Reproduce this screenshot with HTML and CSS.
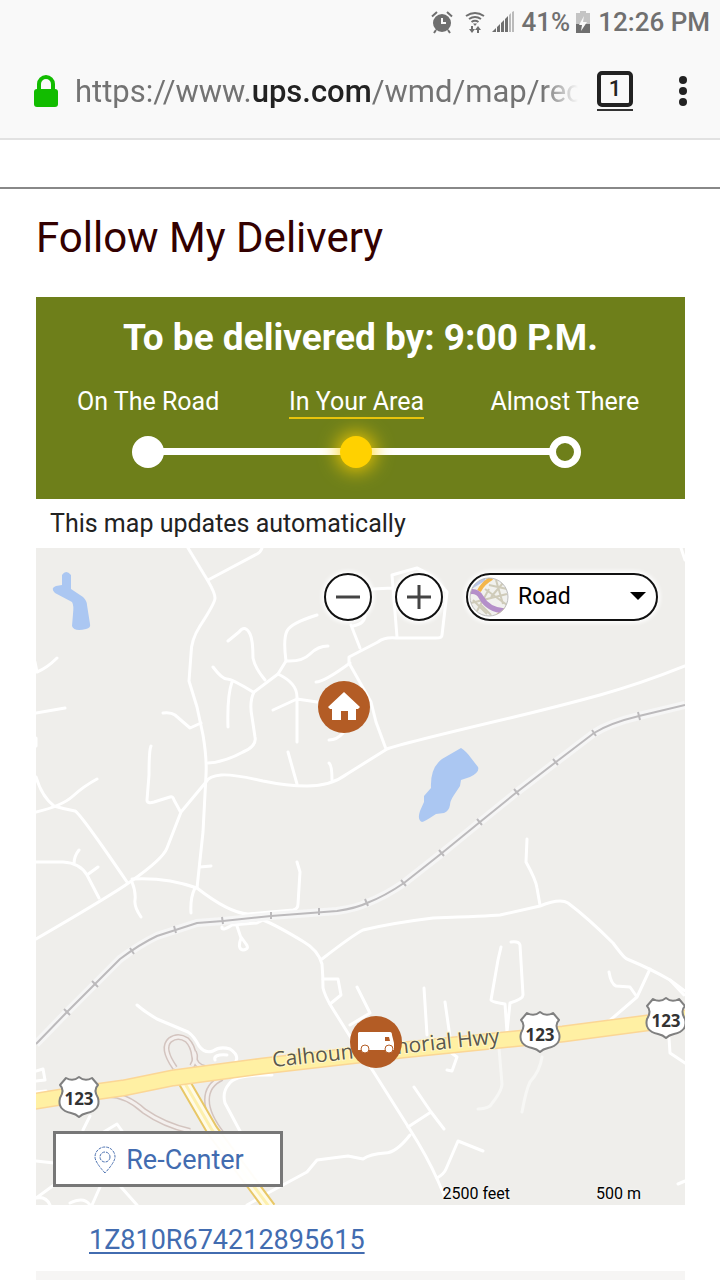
FILE: index.html
```
<!DOCTYPE html>
<html lang="en">
<head>
    <meta charset="utf-8">
    <meta name="viewport" content="width=device-width, initial-scale=1">
    <title>Follow My Delivery</title>
    <link rel="stylesheet" href="styles.css">
</head>
<body>
    <header class="browser">
        <div class="status">
            <svg class="icon-alarm" width="22" height="24" viewBox="0 0 22 24">
                <circle cx="11" cy="13" r="9" fill="#6f6f6f"/>
                <path d="M1 6.500 6 2M21 6.500 16 2M5 20l-2 3M17 20l2 3" stroke="#6f6f6f" stroke-width="2" fill="none"/>
                <path d="M11 8v5h4" stroke="#f9f9f9" stroke-width="2" fill="none"/>
            </svg>
            <svg class="icon-wifi" width="20" height="24" viewBox="0 0 20 24">
                <path d="M1 6q9-6 18 0M4 9q6-4 12 0M6.500 12q3.500-2.500 7 0" stroke="#6f6f6f" stroke-width="2" fill="none"/>
                <path d="M8 13.500h4L10 16z" fill="#6f6f6f"/>
                <path d="M7 16v4M13 23v-4" stroke="#6f6f6f" stroke-width="2"/>
                <path d="M4 19h6l-3 4zM10 20h6l-3-4z" fill="#6f6f6f"/>
            </svg>
            <svg class="icon-signal" width="22" height="22" viewBox="0 0 22 22">
                <path d="M0 21h4v-4zM5 21v-5l3-3v8zM9 21v-9l3-3v12zM13 21V8l3-3v16z" fill="#6f6f6f"/>
                <path d="M17 21V4l2-2v19zM20 21V1l2-1v21z" fill="#bbb"/>
            </svg>
            <span class="percent">41%</span>
            <svg class="icon-battery" width="14" height="22" viewBox="0 0 14 22">
                <path d="M0 2h4V0h6v2h4v11H0z" fill="#c4c4c4"/>
                <path d="M0 13h14v9H0z" fill="#6f6f6f"/>
                <path d="M8 5 3 14h3l-1 6 6-9H7z" fill="#f9f9f9"/>
            </svg>
            <span>12:26 PM</span>
        </div>
        <div class="toolbar">
            <svg class="lock" width="26" height="32" viewBox="0 0 26 32">
                <path d="M6 15V9a7 7 0 0 1 14 0v6" fill="none" stroke="#12bc00" stroke-width="4"/>
                <rect x="1" y="14" width="24" height="18" rx="3" fill="#12bc00"/>
            </svg>
            <button class="url" type="button">https://www.<b>ups.com</b>/wmd/map/rec</button>
            <button class="tabs" type="button" aria-label="Tabs"><span>1</span></button>
            <button class="menu" type="button" aria-label="Menu">
                <svg width="8" height="30" viewBox="0 0 8 30" fill="#222">
                    <circle cx="4" cy="4" r="4"/>
                    <circle cx="4" cy="15" r="4"/>
                    <circle cx="4" cy="26" r="4"/>
                </svg>
            </button>
        </div>
    </header>
    <div class="topline"></div>

    <main>
        <h1>Follow My Delivery</h1>

        <section class="banner">
            <h2>To be delivered by: 9:00 P.M.</h2>
            <ol class="steps">
                <li class="done"><span class="label">On The Road</span><span class="dot"></span></li>
                <li class="current"><span class="label">In Your Area</span><span class="dot"></span></li>
                <li class="next"><span class="label">Almost There</span><span class="dot"></span></li>
            </ol>
        </section>

        <p class="note">This map updates automatically</p>

        <div class="map">
            <svg class="map-canvas" viewBox="36 548 649 657">
                <rect x="36" y="548" width="649" height="657" fill="#efeeeb"/>

                <!-- ponds -->
                <g fill="#abc7f2">
                    <path d="M62 575q4-6 9 0v14l12 8q4 4 4 8l3 19q1 4-4 5-12 3-14-3l1-12q1-9-1-12l-17-9q-5-5 1-7l6-1z"/>
                    <path d="M461 748q5 3 10 10l7 9q2 5-8 10l-9 3-1 6-6 9q-4 6-4 10-1 6-6 8l-8 1q-12 8-14 8-5-2-2-11l4-9v-6l7-8q-1-20 11-29z"/>
                </g>

                <!-- minor roads -->
                <g class="road">
                    <path d="M188 548l20 33q7 12 7 17t-15 28q-9 14-9 28l-2 27 8 26 6 28q4 24 3 40l-3 57-6 56"/>
                    <path d="M208 580l49-26q4-2 5-6M35 662l2 10q10-4 20-14M36 713l29-5M36 738v8"/>
                    <path d="M163 713q8-1 12 2l15 13 11-5M151 746q-2 4-2 29l-2 25q0 4 7 2l16-5q3-1 4 3l6 11"/>
                    <path d="M228 641l11-9q6-8 11 2 3 6 3 24 2 10 12 22M213 667q9 12 14 12 5 0 26 13M232 682q-5 14-4 45"/>
                    <path d="M317 615q-26 8-30 16t-1 30l-8 13-24 18q-5 10-2 25l3 20q2 9-12 15-18 10-35 11"/>
                    <path d="M286 661q16 1 24-7t18-8M278 674q19 9 19 23v45M273 710l24-11 20 3M316 682q8 0 34-19"/>
                    <path d="M351 625l9 23M365 615q0 9-12 11M447 592l-5 43q0 3-6 3h-40q-12-1-18 4l-29 15v6l22 39 5 20 10 27M397 637l-5-62 25-7q15 6 30 24M373 589l19-1"/>
                    <path d="M685 666q-45 18-85 29t-90 23q-110 26-123 31l-40 25q-16 12-40 12-20 0-44-5-30-7-42-6t-15 7l-25 30-14 36q-4 11-37 34-20 14-94 57"/>
                    <path d="M288 752l9 32M329 763q3 2 3 17M329 740q8 0 14-7M681 548l4 12"/>
                    <path d="M36 777q6 20 18 29 10 3 21 5 5 2 52 71M36 812q26-6 37-16t24-17M36 862l27 0q17 1 24 13l12 23M79 850q-5 6-5 14M98 867l-11 8"/>
                    <path d="M132 882q4 10 3 18-1 7 6 17M132 879q34-2 65 9 32 25 51 26l45-4q5-1 5-6l2-32-3-10M200 867l11-1M195 888q-5 10-4 25"/>
                    <path d="M222 927q-1 5 10-2l25-2 6-3q13 5 41 22 14 8 18 22 1 12 1 24 2 8 8 18l20 32 22 33 36 57q18 28 29 53l6 14"/>
                    <path d="M237 926l4 12q-4 11 2 12 7-1 3-6l-5-7M323 979h15l3 16-11 9"/>
                    <path d="M322 959q31-24 41-29 29-7 70-12 55-2 67-3l40-9q20-8 28-3 20 15 45 40 11 15 14 16 24 10 43 21l15 11"/>
                    <path d="M527 839l-1 23q10 18 11 26l3 17M501 947l-3 13-7 40q0 2 14 4l2 28M511 942q8-1 9 3l3 50q0 4-13 8l-3 29"/>
                    <path d="M609 972q2 12 7 14l14 1 7 10M650 969l-13 28-29 25M670 980l14 15M424 988l3 47M445 1002l5 35M357 987l13 26-20 12"/>
                    <path d="M450 1052l7 5-5 14-5-1M414 1087l17 25 13 17M431 1112l-23 15M410 1135q-14 18-25 18-15 1-22 6l-15-3-31 4-10 12-39 21-21 12"/>
                    <path d="M437 1178q7-4 9-9l12-28 25 10M669 1038l1 15 15 10M678 1184l7-3"/>
                    <path d="M137 1005q8 7 20 14l31 13q6 4 11 14 6 8 14 5 7-5 17-2 9 6 6 12M215 1060q-2-6 12-5M272 1075q-37-1-43 9-7 8-4 19l16 30"/>
                    <path d="M36 1071l7-2 2 11-9 1M36 1092l10-1M90 1116l-7 14M102 1133l15-9 5 7M36 1161l18 2M54 1185l-18 13q10-2 14 7M100 1187l-8 18M121 1187l16 18M70 1203q14-7 20 2"/>
                    <path class="faint" d="M499 1048l3 36q0 7-12 22-5 3-12 3M542 1057q-2 14-12 25-4 8-8 30"/>
                </g>

                <!-- railway -->
                <path class="rail-bed" d="M36 1044l31-32 28-28 25-25q20-15 37-23l40-13 26-2 48-5 66-5q20-3 30-8 18-7 37-20l38-30 38-31 37-30 39-30q25-19 38-29 16-10 45-17l46-11"/>
                <path class="rail" d="M36 1044l31-32 28-28 25-25q20-15 37-23l40-13 26-2 48-5 66-5q20-3 30-8 18-7 37-20l38-30 38-31 37-30 39-30q25-19 38-29 16-10 45-17l46-11"/>
                <path class="rail" d="M638 712l2 8M592 730l4 6M553 759l5 6M514 789l5 6M477 819l5 6M439 850l5 6M401 880l5 6M365 899l3 7M319 908v7M271 912v7M222 917l1 7M174 926l2 7M130 948l4 6M92 981l6 6M64 1009l6 6"/>

                <!-- ramps -->
                <g class="ramp">
                    <path d="M175 1068q-14-20-5-28 8-6 17 0 6 6 7 16t11 12M222 1078q-15 7-15 22t16 35M104 1095q20-2 40 16 20 14 46 20"/>
                    <path d="M192 1066q5-8 2-14"/>
                </g>
                <g class="ramp-core">
                    <path d="M175 1068q-14-20-5-28 8-6 17 0 6 6 7 16t11 12M222 1078q-15 7-15 22t16 35M104 1095q20-2 40 16 20 14 46 20"/>
                    <path d="M192 1066q5-8 2-14"/>
                </g>

                <!-- highways -->
                <path d="M183 1080l29 50 58 78" fill="none" stroke="#e8c766" stroke-width="13"/>
                <path d="M183 1080l29 50 58 78" fill="none" stroke="#fffbe6" stroke-width="9"/>
                <path d="M183 1080l29 50 58 78" fill="none" stroke="#fdf0ae" stroke-width="3"/>
                <path d="M30 1102l50-8 43-6 50-10 90-12 140-16 160-16 130-17" fill="none" stroke="#fbd695" stroke-width="17"/>
                <path d="M30 1102l50-8 43-6 50-10 90-12 140-16 160-16 130-17" fill="none" stroke="#fff0a3" stroke-width="14"/>
                <text class="hwy-name" transform="translate(273 1067) rotate(-6)">Calhoun Memorial Hwy</text>

                <!-- route shields -->
                <g class="shield">
                    <g transform="translate(79 1096)">
                        <path d="M-13-18q7 4 13-1 6 5 13 1l6 7q-5 5 0 13 3 12-11 15-5 1-8 4-3-3-8-4-14-3-11-15 5-8 0-13z"/>
                        <text y="9">123</text>
                    </g>
                    <g transform="translate(540 1031)">
                        <path d="M-13-18q7 4 13-1 6 5 13 1l6 7q-5 5 0 13 3 12-11 15-5 1-8 4-3-3-8-4-14-3-11-15 5-8 0-13z"/>
                        <text y="10">123</text>
                    </g>
                    <g transform="translate(666 1017)">
                        <path d="M-13-18q7 4 13-1 6 5 13 1l6 7q-5 5 0 13 3 12-11 15-5 1-8 4-3-3-8-4-14-3-11-15 5-8 0-13z"/>
                        <text y="10">123</text>
                    </g>
                </g>

                <!-- home -->
                <g transform="translate(344 707)">
                    <circle r="26" fill="#b35c25"/>
                    <path d="M0-15 16 0l-2 2h-2v11H4V4h-7v9h-9V2h-2l-2-2z" fill="#fff"/>
                </g>

                <!-- truck -->
                <g transform="translate(376 1042)">
                    <circle r="26" fill="#b35c25"/>
                    <path d="M-17-10h31q2 0 2 3l2 8v7H-18v-17z" fill="#fff"/>
                    <path d="M9-5h4l1 4H9z" fill="#b35c25"/>
                    <circle cx="-11" cy="7" r="4" fill="#fff" stroke="#b35c25"/>
                    <circle cx="13" cy="7" r="4" fill="#fff" stroke="#b35c25"/>
                </g>
            </svg>

            <div class="map-controls">
                <button class="zoom" type="button" aria-label="Zoom out">
                    <svg width="24" height="24" viewBox="0 0 24 24"><path d="M0 12h24"/></svg>
                </button>
                <button class="zoom" type="button" aria-label="Zoom in">
                    <svg width="24" height="24" viewBox="0 0 24 24"><path d="M0 12h24M12 0v24"/></svg>
                </button>
                <div class="map-type">
                    <select aria-label="Map type">
                        <option>Road</option>
                        <option>Aerial</option>
                    </select>
                    <svg class="type-icon" width="40" height="40" viewBox="0 0 40 40">
                        <clipPath id="disc"><circle cx="20" cy="20" r="19"/></clipPath>
                        <g clip-path="url(#disc)" fill="none">
                            <rect width="40" height="40" fill="#f1f1ee"/>
                            <path d="M2 26l36-9M8 34l12-22M16 12l22 16M22 20L34 6M27 3l7 24M12 28l10 10M20 8l18 4M4 23l14 14" stroke="#cfcbb9" stroke-width="2"/>
                            <path d="M3 10 16 2" stroke="#b9c6e8" stroke-width="3"/>
                            <path d="M10 14q4-8 13-13M28 39l9-7" stroke="#f3b64c" stroke-width="4"/>
                            <path d="M0 15q8-2 12 5 7 13 24 14" stroke="#b48fc9" stroke-width="5"/>
                        </g>
                        <circle cx="20" cy="20" r="19" fill="none" stroke="#bbb"/>
                    </svg>
                    <svg class="arrow" width="16" height="8" viewBox="0 0 16 8"><path d="M0 0h16L8 8z"/></svg>
                </div>
            </div>

            <button class="recenter" type="button">
                <svg width="22" height="28" viewBox="0 0 22 28" fill="none" stroke="#4a70b0" stroke-dasharray="3 1">
                    <path d="M11 27Q1 16 1 11a10 10 0 0 1 20 0q0 5-10 16z"/>
                    <circle cx="11" cy="11" r="5"/>
                </svg>
                Re-Center
            </button>

            <div class="scale">
                <span>2500 feet</span>
                <span>500 m</span>
            </div>
        </div>

        <a class="tracking" href="#">1Z810R674212895615</a>
        <div class="panel"></div>
    </main>
</body>
</html>
```
FILE: styles.css
```
* {
    box-sizing: border-box;
}
body {
    margin: 0;
    background-color: #fff;
    font-family: Roboto, Arial, sans-serif;
    color: #222;
}
button, select {
    font-family: inherit;
    cursor: pointer;
}
svg {
    display: block;
    flex-shrink: 0;
}

/* browser bar */
.browser {
    height: 140px;
    background-color: #f9f9f9;
    border-bottom: 2px solid #e2e2e2;
}
.status {
    display: flex;
    justify-content: flex-end;
    align-items: center;
    height: 44px;
    padding-right: 10px;
    font-size: 26px;
    font-weight: 500;
    color: #707070;
}
.icon-alarm {
    margin-right: 12px;
}
.icon-wifi {
    margin-right: 7px;
}
.icon-signal {
    margin-right: 8px;
}
.icon-battery {
    margin: 0 8px 0 6px;
}
.toolbar {
    display: flex;
    align-items: center;
    height: 94px;
    padding: 0 33px;
}
.lock {
    margin-right: 16px;
}
.url {
    flex: 1;
    min-width: 0;
    height: 48px;
    padding: 0;
    border: none;
    background: none;
    overflow: hidden;
    white-space: nowrap;
    text-align: left;
    font-size: 31px;
    color: #737373;
    -webkit-mask-image: linear-gradient(to left, transparent, #000 36px);
    mask-image: linear-gradient(to left, transparent, #000 36px);
}
.url b {
    font-weight: 500;
    color: #222;
}
.tabs {
    width: 36px;
    margin: 0 46px 0 19px;
    padding: 0 0 2px;
    border: none;
    border-bottom: 2px solid #333;
    background: none;
}
.tabs span {
    display: block;
    height: 36px;
    border: 4px solid #222;
    border-radius: 5px;
    font-size: 22px;
    font-weight: 500;
    line-height: 28px;
    color: #222;
}
.menu {
    padding: 0;
    border: none;
    background: none;
}
.topline {
    height: 49px;
    border-bottom: 2px solid #888;
}

/* page */
main {
    padding: 0 35px 0 36px;
}
h1 {
    margin: 23px 0 33px;
    font-size: 42px;
    line-height: 52px;
    font-weight: 400;
    color: #330000;
}
.banner {
    padding: 16px 16px 31px 8px;
    background-color: #6e7f1a;
    color: #fff;
}
.banner h2 {
    margin: 0 0 24px;
    padding-left: 8px;
    font-size: 37px;
    line-height: 50px;
    font-weight: 700;
    text-align: center;
}
.steps {
    display: grid;
    grid-template-columns: repeat(3, 1fr);
    margin: 0;
    padding: 0;
    list-style: none;
}
.steps li {
    position: relative;
    display: flex;
    flex-direction: column;
    align-items: center;
    gap: 17px;
}
.steps li + li::before {
    content: "";
    position: absolute;
    right: calc(50% + 14px);
    bottom: 13px;
    width: calc(100% - 28px);
    height: 7px;
    background-color: #fff;
}
.label {
    font-size: 25px;
    line-height: 30px;
    border-bottom: 2px solid transparent;
}
.dot {
    position: relative;
    width: 32px;
    height: 32px;
    border-radius: 50%;
    background-color: #fff;
}
.current .label {
    border-bottom-color: #e8c40c;
}
.current .dot {
    z-index: 1;
    background-color: #ffd100;
    box-shadow: 0 0 20px 2px #ffd100;
}
.next .dot {
    border: 7px solid #fff;
    background-color: #6e7f1a;
}
.note {
    margin: 0;
    padding: 0 14px;
    font-size: 25px;
    line-height: 49px;
}

/* map */
.map {
    position: relative;
}
.map-canvas {
    width: 100%;
    height: auto;
}
.road {
    fill: none;
    stroke: #fff;
    stroke-width: 3;
    stroke-linecap: round;
    stroke-linejoin: round;
}
.faint {
    stroke: #f7f7f5;
}
.rail-bed {
    fill: none;
    stroke: #f6f6f6;
    stroke-width: 8;
}
.rail {
    fill: none;
    stroke: #bcbabc;
    stroke-width: 2;
}
.ramp {
    fill: none;
    stroke: #d3c4bf;
    stroke-width: 6;
}
.ramp-core {
    fill: none;
    stroke: #f4f0ee;
    stroke-width: 3;
}
.hwy-name {
    font-family: "Open Sans", "Noto Sans", sans-serif;
    font-size: 21px;
    font-weight: 500;
    fill: #5a584c;
    stroke: #fff6cc;
    stroke-width: 2;
    paint-order: stroke;
}
.shield path {
    fill: #fff;
    stroke: #808080;
    stroke-width: 2;
    stroke-linejoin: round;
}
.shield text {
    font-family: "Open Sans", "Noto Sans", sans-serif;
    font-size: 17px;
    font-weight: 700;
    text-anchor: middle;
    fill: #333;
}
.map-controls {
    position: absolute;
    top: 25px;
    right: 27px;
    display: flex;
    gap: 23px;
}
.zoom {
    display: flex;
    align-items: center;
    justify-content: center;
    width: 48px;
    height: 48px;
    padding: 0;
    border: 2px solid #111;
    border-radius: 50%;
    background-color: #fff;
    box-shadow: 0 0 4px 2px #fff;
}
.zoom path {
    stroke: #444;
    stroke-width: 3;
}
.map-type {
    position: relative;
}
.map-type select {
    width: 192px;
    height: 48px;
    padding: 0 30px 2px 50px;
    border: 2px solid #111;
    border-radius: 24px;
    background-color: #fff;
    box-shadow: 0 0 4px 2px #fff;
    appearance: none;
    font-size: 23px;
    color: #000;
}
.type-icon {
    position: absolute;
    top: 4px;
    left: 3px;
    pointer-events: none;
}
.arrow {
    position: absolute;
    top: 19px;
    right: 12px;
    pointer-events: none;
}
.recenter {
    position: absolute;
    left: 17px;
    bottom: 18px;
    display: flex;
    align-items: center;
    justify-content: center;
    gap: 10px;
    width: 230px;
    height: 56px;
    padding: 2px 0 0 2px;
    border: 3px solid #777;
    background-color: rgba(255, 255, 255, 0.96);
    font-size: 27px;
    color: #426cb0;
}
.scale {
    position: absolute;
    right: 44px;
    bottom: 1px;
    display: flex;
    gap: 86px;
    font-size: 16px;
    line-height: 20px;
    color: #000;
    text-shadow: 0 0 3px #fff;
}
.tracking {
    display: block;
    width: fit-content;
    margin: 17px 0 13px 53px;
    font-size: 27px;
    line-height: 36px;
    color: #426cb0;
    text-underline-offset: 3px;
}
.panel {
    height: 9px;
    background-color: #f6f5f4;
}
```
